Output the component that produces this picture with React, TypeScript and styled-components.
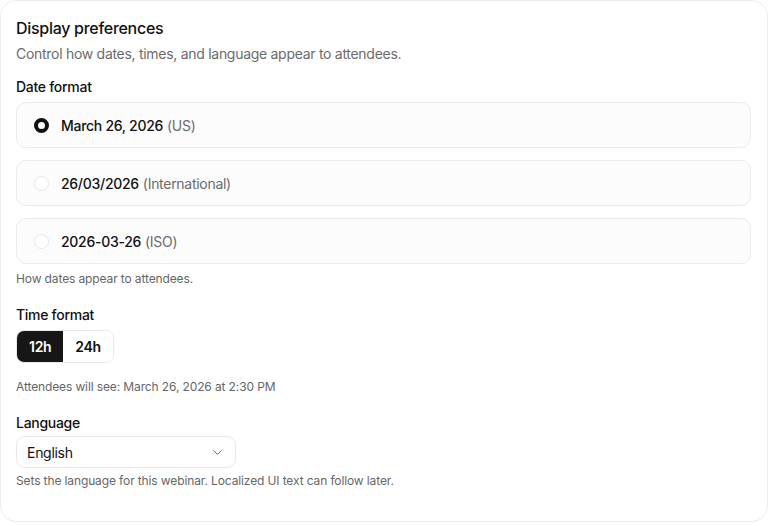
import React, { useState } from "react";
import styled, { createGlobalStyle } from "styled-components";
import { ChevronDown } from "lucide-react";

const GlobalStyle = createGlobalStyle`
	* {
		box-sizing: border-box;
	}
	body {
		margin: 0;
		background: #ffffff;
		font-family: Inter, "Noto Sans", sans-serif;
		letter-spacing: -0.018em;
		color: #111111;
		-webkit-font-smoothing: antialiased;
	}
`;

const CardSC = styled.div`
	width: 768px;
	min-height: 522px;
	background: #ffffff;
	border: 1px solid #ececec;
	border-radius: 16px;
	padding: 16px 16px 20px 15px;
`;

const TitleSC = styled.h2`
	margin: 0;
	font-size: 16px;
	line-height: 22px;
	font-weight: 500;
	color: #111111;
`;

const SubtitleSC = styled.p`
	margin: 5px 0 0;
	font-size: 14px;
	line-height: 20px;
	color: #6b6b6b;
`;

const SectionSC = styled.section<{ $top: number }>`
	margin-top: ${(p) => p.$top}px;
`;

const LabelSC = styled.div<{ $gap: number }>`
	font-size: 14px;
	line-height: 20px;
	font-weight: 500;
	color: #111111;
	margin-bottom: ${(p) => p.$gap}px;
`;

const OptionListSC = styled.div`
	display: flex;
	flex-direction: column;
	gap: 12px;
`;

const OptionSC = styled.label`
	display: flex;
	align-items: center;
	gap: 12px;
	height: 46px;
	padding: 0 17px;
	border: 1px solid #ebebeb;
	border-radius: 10px;
	background: #fcfcfc;
	font-size: 14px;
	cursor: pointer;
`;

const RadioSC = styled.span<{ $checked: boolean }>`
	width: 15px;
	height: 15px;
	border-radius: 50%;
	flex-shrink: 0;
	border: ${(p) => (p.$checked ? "4px solid #111111" : "1px solid #e6e6e6")};
	background: #ffffff;
`;

const OptionValueSC = styled.span`
	font-weight: 500;
	color: #111111;
`;

const OptionNoteSC = styled.span`
	color: #6b6b6b;
	margin-left: 4px;
`;

const HelpSC = styled.p<{ $top: number }>`
	margin: ${(p) => p.$top}px 0 0;
	font-size: 12px;
	line-height: 16px;
	letter-spacing: -0.01em;
	color: #666666;
`;

const SegmentedSC = styled.div`
	display: inline-flex;
	border: 1px solid #e8e8e8;
	border-radius: 8px;
	overflow: hidden;
	background: #ffffff;
`;

const SegmentSC = styled.button<{ $active: boolean }>`
	height: 31px;
	padding: 0 12px;
	border: none;
	font-family: inherit;
	letter-spacing: inherit;
	font-size: 14px;
	font-weight: 600;
	background: ${(p) => (p.$active ? "#161616" : "#ffffff")};
	color: ${(p) => (p.$active ? "#ffffff" : "#111111")};
	cursor: pointer;
`;

const SelectSC = styled.div`
	display: flex;
	align-items: center;
	justify-content: space-between;
	width: 220px;
	height: 32px;
	padding: 0 10px 0 10px;
	border: 1px solid #e8e8e8;
	border-radius: 9px;
	background: #ffffff;
	font-size: 14px;
	color: #111111;
	svg {
		color: #666666;
	}
`;

const dateOptions = [
	{ id: "us", value: "March 26, 2026", note: "(US)" },
	{ id: "intl", value: "26/03/2026", note: "(International)" },
	{ id: "iso", value: "2026-03-26", note: "(ISO)" },
];

const App = () => {
	const [dateFormat, setDateFormat] = useState("us");
	const [timeFormat, setTimeFormat] = useState("12h");

	return (
		<>
			<GlobalStyle />
			<CardSC>
				<TitleSC>Display preferences</TitleSC>
				<SubtitleSC>
					Control how dates, times, and language appear to attendees.
				</SubtitleSC>

				<SectionSC $top={13}>
					<LabelSC $gap={5}>Date format</LabelSC>
					<OptionListSC>
						{dateOptions.map((o) => (
							<OptionSC key={o.id} onClick={() => setDateFormat(o.id)}>
								<RadioSC $checked={dateFormat === o.id} />
								<span>
									<OptionValueSC>{o.value}</OptionValueSC>
									<OptionNoteSC>{o.note}</OptionNoteSC>
								</span>
							</OptionSC>
						))}
					</OptionListSC>
					<HelpSC $top={7}>How dates appear to attendees.</HelpSC>
				</SectionSC>

				<SectionSC $top={18}>
					<LabelSC $gap={5}>Time format</LabelSC>
					<SegmentedSC>
						{["12h", "24h"].map((t) => (
							<SegmentSC
								key={t}
								$active={timeFormat === t}
								onClick={() => setTimeFormat(t)}
							>
								{t}
							</SegmentSC>
						))}
					</SegmentedSC>
					<HelpSC $top={16}>
						Attendees will see: March 26, 2026 at 2:30 PM
					</HelpSC>
				</SectionSC>

				<SectionSC $top={18}>
					<LabelSC $gap={3}>Language</LabelSC>
					<SelectSC>
						<span>English</span>
						<ChevronDown size={15} strokeWidth={1.6} />
					</SelectSC>
					<HelpSC $top={5}>
						Sets the language for this webinar. Localized UI text can follow
						later.
					</HelpSC>
				</SectionSC>
			</CardSC>
		</>
	);
};

export default App;
